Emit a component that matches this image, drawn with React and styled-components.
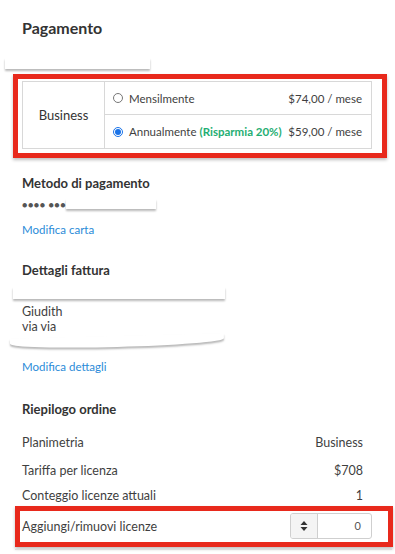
import React from "react";
import styled, { createGlobalStyle } from "styled-components";

const GlobalStyle = createGlobalStyle`
  html, body {
    margin: 0;
    padding: 0;
    background: #fff;
    font-family: Lato, "Open Sans", sans-serif;
    color: #3f3f3f;
  }
`;

const Page = styled.div`
  width: 395px;
  height: 554px;
  overflow: hidden;
  padding: 0 23px 0 22px;
  box-sizing: border-box;
`;

const Title = styled.h1`
  margin: 0;
  padding-top: 17px;
  font-size: 16px;
  line-height: 22px;
  font-weight: 700;
  color: #333;
`;

const Strip = styled.div`
  background: #fff;
  height: ${p => p.h || 12}px;
  width: ${p => p.w}px;
  margin-left: ${p => p.ml || 0}px;
  margin-top: ${p => p.mt || 0}px;
  box-shadow: 0 2px 2px rgba(0, 0, 0, 0.28);
  border-radius: ${p => (p.curved ? "0 0 50% 50% / 0 0 6px 6px" : "0")};
  transform: ${p => (p.curved ? "rotate(-1.5deg)" : "none")};
  position: relative;
`;

const Highlight = styled.div`
  border: 5px solid #e8291c;
  box-shadow: 0 2px 3px rgba(0, 0, 0, 0.25);
  margin: ${p => p.m};
  padding: ${p => p.p};
`;

const PlanTable = styled.div`
  display: grid;
  grid-template-columns: 82px 1fr;
  border: 1px solid #d8d8d8;
  font-size: 11.5px;
`;

const PlanName = styled.div`
  display: flex;
  align-items: center;
  justify-content: center;
  font-size: 13px;
  color: #333;
  border-right: 1px solid #d8d8d8;
`;

const Options = styled.div`
  display: flex;
  flex-direction: column;
`;

const Option = styled.label`
  display: flex;
  align-items: center;
  white-space: nowrap;
  height: ${p => p.h}px;
  padding: 0 9px 0 8px;
  border-top: ${p => (p.first ? "none" : "1px solid #d8d8d8")};
  color: #3f3f3f;
`;

const Radio = styled.span`
  width: 10px;
  height: 10px;
  border-radius: 50%;
  box-sizing: border-box;
  border: 1px solid ${p => (p.checked ? "#1a73e8" : "#777")};
  margin-right: 6px;
  display: flex;
  align-items: center;
  justify-content: center;
  background: #fff;
  &::after {
    content: "";
    width: 6px;
    height: 6px;
    border-radius: 50%;
    background: ${p => (p.checked ? "#1a73e8" : "transparent")};
  }
`;

const Save = styled.span`
  color: #1fae73;
  font-weight: 700;
  margin-left: 3px;
`;

const Price = styled.span`
  margin-left: auto;
`;

const Heading = styled.h2`
  margin: ${p => p.mt}px 0 0;
  font-size: 13px;
  line-height: 18px;
  font-weight: 700;
  color: #333;
`;

const CardRow = styled.div`
  display: flex;
  align-items: center;
  margin-top: 5px;
  height: 14px;
  font-size: 9px;
  letter-spacing: 0.5px;
  color: #555;
`;

const Link = styled.a`
  display: block;
  font-size: 11.5px;
  line-height: 16px;
  color: #2a8bd8;
  text-decoration: none;
  margin-top: ${p => p.mt}px;
`;

const Line = styled.div`
  font-size: 12.5px;
  line-height: 15px;
  color: #3f3f3f;
`;

const Clip = styled.div`
  height: ${p => p.h}px;
`;

const Summary = styled.div`
  margin-top: 10px;
`;

const SummaryRow = styled.div`
  display: flex;
  align-items: center;
  justify-content: space-between;
  height: ${p => p.h || 28}px;
  padding-right: ${p => (p.flush ? 0 : 9)}px;
  font-size: 12.5px;
  color: #3f3f3f;
`;

const Stepper = styled.div`
  display: flex;
  width: 82px;
  height: 26px;
  border: 1px solid #cfcfcf;
  border-radius: 3px;
  box-sizing: border-box;
  overflow: hidden;
`;

const Spin = styled.div`
  width: 26px;
  background: #f4f4f4;
  border-right: 1px solid #cfcfcf;
  display: flex;
  align-items: center;
  justify-content: center;
`;

const Value = styled.div`
  flex: 1;
  text-align: right;
  padding-right: 10px;
  font-size: 11px;
  line-height: 24px;
  color: #555;
`;

const Rule = styled.div`
  border-bottom: 1px solid #ddd;
  margin: 2px -20px 0 -7px;
`;

export default function App() {
  return (
    <Page>
      <GlobalStyle />
      <Title>Pagamento</Title>
      <Strip w={145} h={11} ml={-17} mt={19} />

      <Highlight m="5px -15px 0 -9px" p="2px 10px 4px 4px">
        <PlanTable>
          <PlanName>Business</PlanName>
          <Options>
            <Option first h={32}>
              <Radio />
              Mensilmente
              <Price>$74,00 / mese</Price>
            </Option>
            <Option h={33}>
              <Radio checked />
              Annualmente <Save>(Risparmia 20%)</Save>
              <Price>$59,00 / mese</Price>
            </Option>
          </Options>
        </PlanTable>
      </Highlight>

      <Heading mt={16}>Metodo di pagamento</Heading>
      <CardRow>
        ●●●● ●●●
        <Strip w={90} h={10} mt={0} />
      </CardRow>
      <Link mt={11}>Modifica carta</Link>

      <Heading mt={23}>Dettagli fattura</Heading>
      <Strip w={212} h={12} ml={-9} mt={8} />
      <Line style={{ marginTop: 5 }}>Giudith</Line>
      <Line>via via</Line>
      <Clip h={12}>
        <Strip w={214} h={11} ml={-12} mt={2} curved />
      </Clip>
      <Link mt={11}>Modifica dettagli</Link>

      <Heading mt={25}>Riepilogo ordine</Heading>
      <Summary>
        <SummaryRow>
          <span>Planimetria</span>
          <span>Business</span>
        </SummaryRow>
        <SummaryRow>
          <span>Tariffa per licenza</span>
          <span>$708</span>
        </SummaryRow>
        <SummaryRow h={22}>
          <span>Conteggio licenze attuali</span>
          <span>1</span>
        </SummaryRow>
        <Highlight m="0 -21px 0 -7px" p="1px 16px 2px 2px">
          <SummaryRow flush h={28}>
            <span>Aggiungi/rimuovi licenze</span>
            <Stepper>
              <Spin>
                <svg width="8" height="12" viewBox="0 0 8 12">
                  <path d="M4 1 L7.5 5 H0.5 Z" fill="#333" />
                  <path d="M4 11 L7.5 7 H0.5 Z" fill="#333" />
                </svg>
              </Spin>
              <Value>0</Value>
            </Stepper>
          </SummaryRow>
        </Highlight>
        <Rule />
      </Summary>
    </Page>
  );
}
